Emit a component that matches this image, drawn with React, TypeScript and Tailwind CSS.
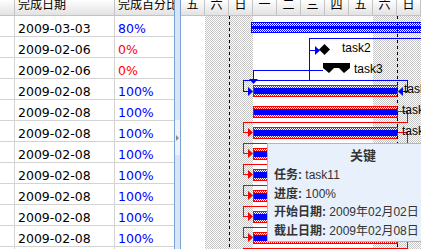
import React from "react";

type Row = { date: string; pct: string; late: boolean };

const rows: Row[] = [
  { date: "2009-03-03", pct: "80%", late: false },
  { date: "2009-02-06", pct: "0%", late: true },
  { date: "2009-02-06", pct: "0%", late: true },
  ...Array.from({ length: 8 }, () => ({ date: "2009-02-08", pct: "100%", late: false })),
  { date: "", pct: "", late: false },
];

const days = ["五", "六", "日", "一", "二", "三", "四", "五", "六", "日"];

const headBg = "bg-[linear-gradient(#fefefe,#e2e2e2)]";
const dots = "bg-[image:repeating-conic-gradient(#c4c4c4_0_25%,#ffffff_0_50%)] bg-[length:2px_2px]";
const redChk = "bg-[image:repeating-conic-gradient(#ff0000_0_25%,#ffffff_0_50%)] bg-[length:2px_2px]";
const blueChk = "bg-[image:repeating-conic-gradient(#0000ff_0_25%,#ffffff_0_50%)] bg-[length:2px_2px]";
const dash = "bg-[image:repeating-linear-gradient(#000000_0_3px,transparent_3px_6px)]";

function Tri({ dir, className, style }: { dir: "r" | "l" | "d"; className: string; style?: React.CSSProperties }) {
  const pts = dir === "r" ? "0,0 5,4.5 0,9" : dir === "l" ? "5,0 0,4.5 5,9" : "0,0 9,0 4.5,5";
  return (
    <svg width={dir === "d" ? 9 : 5} height={dir === "d" ? 5 : 9} className={"absolute " + className} style={style}>
      <polygon points={pts} />
    </svg>
  );
}

function Grid() {
  return (
    <div className="flex w-[174px] shrink-0 flex-col">
      <div className={`flex h-[16px] shrink-0 border-b border-[#c3c3c3] ${headBg} font-['Noto_Sans_CJK_SC',sans-serif] text-[12px] leading-[12px] text-black`}>
        <div className="w-[15px] border-r border-[#c3c3c3]" />
        <div className="w-[100px] overflow-hidden whitespace-nowrap border-r border-[#c3c3c3] pl-[3px]">
          <div className="-mt-[2px]">完成日期</div>
        </div>
        <div className="flex-1 overflow-hidden whitespace-nowrap pl-[3px]">
          <div className="-mt-[2px]">完成百分比</div>
        </div>
      </div>
      {rows.map((r, i) => (
        <div key={i} className="flex h-[21px] shrink-0 border-b border-[#d3d3d3] font-['DejaVu_Sans',sans-serif] text-[12.5px] leading-[16px]">
          <div className="w-[15px] border-r border-[#d3d3d3]" />
          <div className="w-[100px] border-r border-[#d3d3d3] pl-[3px] pt-[5px] text-black">{r.date}</div>
          <div className={`flex-1 pl-[3px] pt-[5px] ${r.late ? "text-[#ff0000]" : "text-[#0000ff]"}`}>{r.pct}</div>
        </div>
      ))}
    </div>
  );
}

function Splitter() {
  return (
    <div className="relative w-[7px] shrink-0 border-x border-[#7aa0d6] bg-[#d6e5f8]">
      <div className="absolute left-0 top-[120px] flex h-[35px] w-[5px] items-center justify-center bg-[#edf3fb]">
        <div className="h-0 w-0 border-y-[3px] border-l-[3px] border-y-transparent border-l-[#8a8a8a]" />
      </div>
    </div>
  );
}

function TaskRow({ r, label }: { r: number; label?: string }) {
  return (
    <div className="flex h-[21px] shrink-0 items-start pl-[72px] pt-[6px]">
      <div className="flex h-[12px] w-[145px] shrink-0 flex-col border border-[#ff0000]">
        <div className={`h-[2px] ${redChk}`} />
        <div className="flex-1 bg-[#0000ff]" />
        <div className={`h-[2px] ${redChk}`} />
      </div>
      {label && <div className={`-mt-[2px] whitespace-nowrap ${r === 3 ? "ml-[6px]" : "ml-[4px]"}`}>{label}</div>}
    </div>
  );
}

function RedLink({ r }: { r: number }) {
  const prev = 21 * (r - 1) + 11;
  const top = 21 * r + 1;
  return (
    <>
      <div className="absolute left-[217px] h-px w-[10px] bg-[#ff0000]" style={{ top: prev }} />
      <div className="absolute left-[226px] w-px bg-[#ff0000]" style={{ top: prev, height: top - prev + 1 }} />
      <div className="absolute left-[62px] h-px w-[165px] bg-[#ff0000]" style={{ top }} />
      <div className="absolute left-[62px] h-[11px] w-px bg-[#ff0000]" style={{ top }} />
      <div className="absolute left-[62px] h-px w-[5px] bg-[#ff0000]" style={{ top: 21 * r + 11 }} />
      <Tri dir="r" className="left-[67px] fill-[#ff0000]" style={{ top: 21 * r + 7 }} />
    </>
  );
}

function Gantt() {
  return (
    <div className="flex w-[240px] shrink-0 flex-col overflow-hidden">
      <div className={`flex h-[16px] shrink-0 border-b border-[#c3c3c3] ${headBg} font-['Noto_Sans_CJK_SC',sans-serif] text-[12px] leading-[12px] text-black`}>
        {days.map((d, i) => (
          <div key={i} className="w-[24px] shrink-0 overflow-hidden border-r border-[#c3c3c3] text-center">
            <div className="-mt-[2px]">{d}</div>
          </div>
        ))}
      </div>
      <div className="relative flex-1 overflow-hidden bg-white font-['Liberation_Sans',sans-serif] text-[12px] leading-[13px] text-black">
        <div className={`absolute left-[24px] top-0 h-full w-[48px] ${dots}`} />
        <div className={`absolute left-[192px] top-0 h-full w-[48px] ${dots}`} />

        {/* connectors */}
        <div className="absolute left-[128px] top-[22px] h-px w-[120px] bg-[#0000ff]" />
        <div className="absolute left-[128px] top-[22px] h-[43px] w-px bg-[#0000ff]" />
        <div className="absolute left-[128px] top-[34px] h-px w-[6px] bg-[#0000ff]" />
        <Tri dir="r" className="left-[134px] top-[30px] fill-[#0000ff]" />
        <div className="absolute left-[72px] top-[54px] h-px w-[70px] bg-[#0000ff]" />
        <div className="absolute left-[72px] top-[54px] h-[10px] w-px bg-[#0000ff]" />
        <Tri dir="d" className="left-[68px] top-[63px] fill-[#0000ff]" />
        <div className="absolute left-[62px] top-[64px] h-px w-[165px] bg-[#0000ff]" />
        <div className="absolute left-[62px] top-[64px] h-[12px] w-px bg-[#0000ff]" />
        <div className="absolute left-[62px] top-[75px] h-px w-[5px] bg-[#0000ff]" />
        <Tri dir="r" className="left-[67px] top-[71px] fill-[#0000ff]" />
        <div className="absolute left-[226px] top-[64px] h-[12px] w-px bg-[#0000ff]" />
        <div className="absolute left-[222px] top-[75px] h-px w-[4px] bg-[#0000ff]" />
        <Tri dir="l" className="left-[217px] top-[71px] fill-[#0000ff]" />
        {[5, 6, 7, 8, 9, 10, 11].map((r) => (
          <RedLink key={r} r={r} />
        ))}

        {/* task rows */}
        <div className="relative flex flex-col">
          <div className="flex h-[21px] shrink-0 items-start">
            <div className="ml-[9px] mt-[11px] h-px w-[2px] bg-[#000080]" />
            <div className="ml-[61px] mt-[6px] flex h-[11px] w-[200px] shrink-0 flex-col border border-[#0000ff]">
              <div className={`h-[3px] ${blueChk}`} />
              <div className="flex-1 bg-[#0000ff]" />
              <div className={`h-[3px] ${blueChk}`} />
            </div>
          </div>
          <div className="flex h-[21px] shrink-0 items-start pl-[138px]">
            <svg width="11" height="11" className="mt-[7px] shrink-0">
              <polygon points="5.5,0 11,5.5 5.5,11 0,5.5" fill="#000" />
            </svg>
            <div className="ml-[12px] mt-[5px]">task2</div>
          </div>
          <div className="flex h-[21px] shrink-0 items-start gap-[4px] pl-[142px] pt-[5px]">
            <svg width="27" height="10" className="shrink-0">
              <polygon points="0,0 27,0 27,5 21,10 16,5 11,5 6,10 0,5" fill="#000" />
            </svg>
            <div>task3</div>
          </div>
          {[3, 4, 5, 6, 7, 8, 9, 10, 11].map((r) => (
            <TaskRow key={r} r={r} label={r <= 5 ? `task${r + 1}` : undefined} />
          ))}
        </div>

        <div className={`absolute left-[48px] top-0 h-full w-px ${dash}`} />
        <div className={`absolute left-[216px] top-0 h-full w-px ${dash}`} />
      </div>
    </div>
  );
}

export default function App() {
  return (
    <div className="relative flex h-[249px] w-[421px] overflow-hidden bg-white">
      <Grid />
      <Splitter />
      <Gantt />

      <div className="absolute left-[267px] top-[143px] h-[99px] w-[192px] border border-[#a3b8d3] bg-[#e7f0fb] px-[6px] pt-[3px] font-['Liberation_Sans','Noto_Sans_CJK_SC',sans-serif] text-[12px] text-[#333333]">
        <div className="text-center text-[13px] font-bold leading-[18px]">关键</div>
        <div className="mt-[1px] whitespace-nowrap leading-[18.5px]">
          <div><b>任务:</b> task11</div>
          <div><b>进度:</b> 100%</div>
          <div><b>开始日期:</b> 2009年02月02日</div>
          <div><b>截止日期:</b> 2009年02月08日</div>
        </div>
      </div>
    </div>
  );
}
